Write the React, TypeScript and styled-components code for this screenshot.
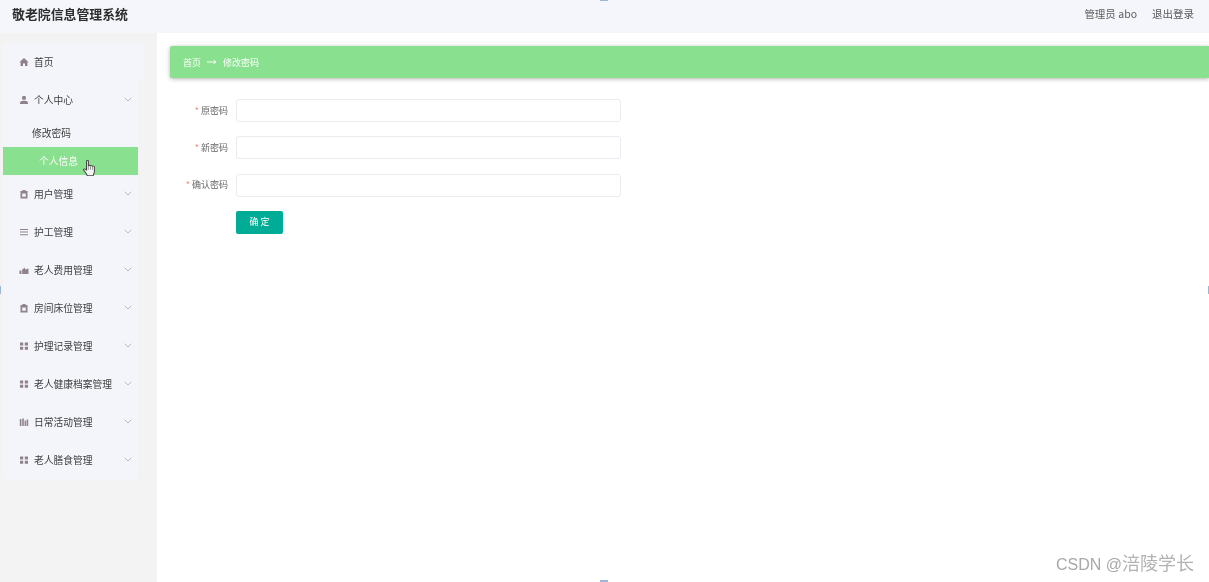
import React from 'react';
import styled, { createGlobalStyle } from 'styled-components';

const GlobalStyle = createGlobalStyle`
  html, body { margin: 0; padding: 0; height: 100%; background: #fff; }
  body { font-family: "Noto Sans CJK SC", "Liberation Sans", sans-serif; overflow: hidden; }
  * { box-sizing: border-box; }
`;

const HomeIcon = () => (
  <svg viewBox="0 0 10 10" width="10" height="10"><path d="M5 1 L9.6 5.2 L8.4 5.2 L8.4 9 L6 9 L6 6.4 L4 6.4 L4 9 L1.6 9 L1.6 5.2 L.4 5.2 Z" fill="currentColor" /></svg>
);
const UserIcon = () => (
  <svg viewBox="0 0 10 10" width="10" height="10"><circle cx="5" cy="2.9" r="2.1" fill="currentColor" /><path d="M1 9 L1 7.6 C1 6.2 3 5.8 5 5.8 C7 5.8 9 6.2 9 7.6 L9 9 Z" fill="currentColor" /></svg>
);
const ClipIcon = () => (
  <svg viewBox="0 0 10 10" width="10" height="10"><path fillRule="evenodd" d="M1.5 2 L3.5 2 L3.5 1 L6.5 1 L6.5 2 L8.5 2 L8.5 9.5 L1.5 9.5 Z M3.2 4.5 L3.2 7.8 L6.8 7.8 L6.8 4.5 Z" fill="currentColor" /></svg>
);
const LinesIcon = () => (
  <svg viewBox="0 0 10 10" width="10" height="10"><path d="M1 2h8v1H1zM1 4.6h8v1H1zM1 7.2h8v1H1z" fill="currentColor" /></svg>
);
const FeeIcon = () => (
  <svg viewBox="0 0 10 10" width="10" height="10"><path d="M.5 5.5h2v3.5h-2zM3.2 4.6 L6 2.6 L6 4.4 L9.5 3.4 L9.5 9 L3.2 9 Z" fill="currentColor" /></svg>
);
const GridIcon = () => (
  <svg viewBox="0 0 10 10" width="10" height="10"><path d="M1 1.5h3.2v3H1zM5.8 1.5H9v3H5.8zM1 5.8h3.2v3H1zM5.8 5.8H9v3H5.8z" fill="currentColor" /></svg>
);
const BarsIcon = () => (
  <svg viewBox="0 0 10 10" width="10" height="10"><path d="M.8 2h1.6v7H.8zM3.2 1.5h1.6V9H3.2zM5.6 3.5h1.4V9H5.6zM7.6 2.4h1.6V9H7.6z" fill="currentColor" /></svg>
);
const Chevron = () => (
  <svg viewBox="0 0 8 5" width="8" height="5"><path d="M.7 .8 L4 4 L7.3 .8" fill="none" stroke="currentColor" strokeWidth="0.9" /></svg>
);
const CrumbArrowIcon = () => (
  <svg viewBox="0 0 10 6" width="10" height="6"><path d="M0 3h8.6M6.6 1 L9 3 L6.6 5" fill="none" stroke="currentColor" strokeWidth="1" /></svg>
);
const HandCursor = () => (
  <svg viewBox="0.5 0.5 10.5 16.5" width="12" height="16" preserveAspectRatio="none">
    <path d="M3.6 1.6 C3.6 .5 5.2 .5 5.2 1.6 L5.2 6.4 C5.6 5.8 6.8 5.8 7 6.6 C7.4 6 8.6 6.1 8.8 7 C9.3 6.6 10.4 6.8 10.5 7.8 L10.5 12 C10.5 14 9.6 15 9.4 16.6 L4.2 16.6 C3.8 14.8 2.6 13.4 1.3 11.4 C.5 10.2 1.6 9.2 2.6 10 L3.6 11 Z" fill="#f4f4f4" stroke="#444" strokeWidth="0.9" strokeLinejoin="round" />
    <path d="M5.2 6.6v4M7 6.8v3.8M8.8 7.2v3.4" stroke="#666" strokeWidth="0.6" fill="none" />
  </svg>
);

const menu = [
  { label: '用户管理', icon: <ClipIcon /> },
  { label: '护工管理', icon: <LinesIcon /> },
  { label: '老人费用管理', icon: <FeeIcon /> },
  { label: '房间床位管理', icon: <ClipIcon /> },
  { label: '护理记录管理', icon: <GridIcon /> },
  { label: '老人健康档案管理', icon: <GridIcon /> },
  { label: '日常活动管理', icon: <BarsIcon /> },
  { label: '老人膳食管理', icon: <GridIcon /> },
];

const fields = [
  { label: '原密码' },
  { label: '新密码' },
  { label: '确认密码' },
];

const App = () => (
  <>
    <GlobalStyle />
    <Screen>
      <Header>
        <Title>敬老院信息管理系统</Title>
        <UserArea>
          <span>管理员 abo</span>
          <span>退出登录</span>
        </UserArea>
      </Header>
      <Body>
        <Aside>
          <Menu>
            <MenuRow $wide>
              <IconBox><HomeIcon /></IconBox>
              <MenuLabel>首页</MenuLabel>
            </MenuRow>
            <MenuRow>
              <IconBox><UserIcon /></IconBox>
              <MenuLabel>个人中心</MenuLabel>
              <ChevronBox><Chevron /></ChevronBox>
            </MenuRow>
            <SubRow>修改密码</SubRow>
            <SubRow $active>
              个人信息
              <CursorBox><HandCursor /></CursorBox>
            </SubRow>
            {menu.map(item => (
              <MenuRow key={item.label}>
                <IconBox>{item.icon}</IconBox>
                <MenuLabel>{item.label}</MenuLabel>
                <ChevronBox><Chevron /></ChevronBox>
              </MenuRow>
            ))}
          </Menu>
        </Aside>
        <Main>
          <Breadcrumb>
            <span>首页</span>
            <CrumbArrow><CrumbArrowIcon /></CrumbArrow>
            <span>修改密码</span>
          </Breadcrumb>
          <Form>
            {fields.map(field => (
              <FormRow key={field.label}>
                <FieldLabel><Star>*</Star>{field.label}</FieldLabel>
                <FieldInput type="password" />
              </FormRow>
            ))}
            <FormRow>
              <FieldLabel />
              <SubmitButton>确 定</SubmitButton>
            </FormRow>
          </Form>
        </Main>
      </Body>
    </Screen>
    <Handle $pos="top" />
    <Handle $pos="left" />
    <Handle $pos="right" />
    <Handle $pos="bottom" />
    <Watermark>CSDN @<WatermarkName>涪陵学长</WatermarkName></Watermark>
  </>
);

const Screen = styled.div`
  display: flex;
  flex-direction: column;
  height: 100vh;
  overflow: hidden;
  filter: blur(0.6px);
`;

const Header = styled.header`
  display: flex;
  align-items: center;
  justify-content: space-between;
  flex: 0 0 33px;
  padding: 0 15px 6px 12px;
  background: #f4f6fb;
`;

const Title = styled.div`
  font-size: 12.9px;
  font-weight: 700;
  color: #2e2e2e;
`;

const UserArea = styled.div`
  display: flex;
  align-items: center;
  gap: 15px;
  font-size: 10.5px;
  color: #5c5c5c;
`;

const Body = styled.div`
  display: flex;
  flex: 1;
  min-height: 0;
`;

const Aside = styled.aside`
  flex: 0 0 157px;
  padding: 10px 0 0 3px;
  background: #f3f3f3;
`;

const Menu = styled.nav`
  display: flex;
  flex-direction: column;
  align-items: flex-start;
`;

const MenuRow = styled.div<{ $wide?: boolean }>`
  display: flex;
  align-items: center;
  width: ${({ $wide }) => ($wide ? '141px' : '135px')};
  height: 38px;
  padding: 0 6px 1px 16px;
  background: #f3f5fa;
  font-size: 9.75px;
  color: #3c3c3c;
`;

const IconBox = styled.span`
  display: flex;
  flex: 0 0 10px;
  margin-right: 5px;
  color: #8f818d;
`;

const MenuLabel = styled.span`
  flex: 1;
  white-space: nowrap;
`;

const ChevronBox = styled.span`
  display: flex;
  color: #b4b4bc;
`;

const SubRow = styled.div<{ $active?: boolean }>`
  position: relative;
  display: flex;
  align-items: center;
  width: 135px;
  height: 28px;
  padding-bottom: 1px;
  padding-left: ${({ $active }) => ($active ? '36px' : '29px')};
  background: ${({ $active }) => ($active ? '#89e08e' : '#f3f5fa')};
  font-size: 9.75px;
  color: ${({ $active }) => ($active ? '#fff' : '#3c3c3c')};
`;

const CursorBox = styled.span`
  position: absolute;
  left: 80px;
  top: 13px;
  display: flex;
`;

const Main = styled.main`
  flex: 1;
  min-width: 0;
  padding: 13px 0 0 13px;
  background: #fff;
`;

const Breadcrumb = styled.div`
  display: flex;
  align-items: center;
  height: 32px;
  padding-left: 13px;
  background: #89e08e;
  border-radius: 2px 0 0 2px;
  box-shadow: 0 1px 4px rgba(0, 0, 0, 0.3);
  font-size: 9px;
  color: #fff;
`;

const CrumbArrow = styled.span`
  display: flex;
  margin: 0 6px;
`;

const Form = styled.form`
  display: flex;
  flex-direction: column;
  gap: 14.3px;
  margin-top: 21px;
`;

const FormRow = styled.div`
  display: flex;
  align-items: center;
  gap: 8px;
`;

const FieldLabel = styled.label`
  flex: 0 0 58px;
  padding-bottom: 1px;
  text-align: right;
  font-size: 9px;
  color: #666;
`;

const Star = styled.span`
  margin-right: 2px;
  color: #f08a7e;
`;

const FieldInput = styled.input`
  width: 385px;
  height: 23px;
  padding: 0 8px;
  background: #fff;
  border: 1px solid #e9ebf0;
  border-radius: 3px;
  outline: none;
`;

const SubmitButton = styled.button`
  width: 47px;
  height: 23px;
  padding: 0 0 1px;
  background: #00ac96;
  border: none;
  border-radius: 2px;
  font-family: inherit;
  font-size: 9px;
  color: #fff;
`;

const Handle = styled.span<{ $pos: 'top' | 'left' | 'right' | 'bottom' }>`
  position: fixed;
  background: #9db7d2;
  ${({ $pos }) =>
    $pos === 'top' ? 'left: 600px; top: 0; width: 8px; height: 1px;' :
    $pos === 'bottom' ? 'left: 600px; bottom: 0; width: 8px; height: 2px;' :
    $pos === 'left' ? 'left: 0; top: 286px; width: 1px; height: 8px;' :
    'right: 0; top: 286px; width: 1px; height: 8px;'}
`;

const Watermark = styled.div`
  position: fixed;
  right: 15px;
  bottom: 6px;
  font-family: "Liberation Sans", "Noto Sans CJK SC", sans-serif;
  font-size: 16px;
  line-height: 22px;
  color: #a8a8a8;
`;

const WatermarkName = styled.span`
  font-size: 18px;
  color: #b2b2b2;
`;

export default App;
